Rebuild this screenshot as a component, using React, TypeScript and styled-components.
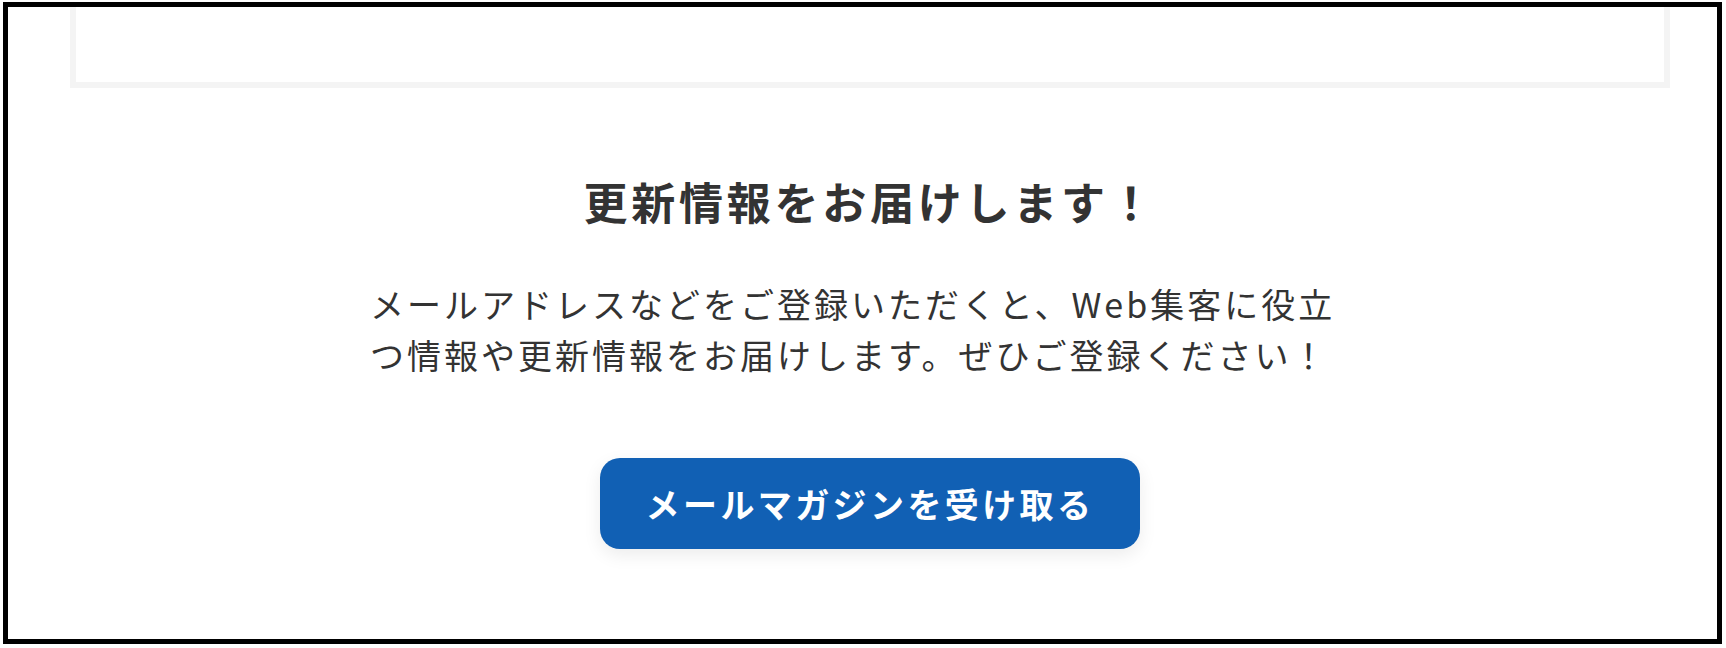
import React from 'react';
import styled, { createGlobalStyle } from 'styled-components';

const GlobalStyle = createGlobalStyle`
  html, body {
    margin: 0;
    padding: 0;
    background: #fff;
  }
  body {
    font-family: "Noto Sans CJK JP", "Noto Sans", sans-serif;
    color: #333;
  }
`;

function App() {
  return (
    <>
      <GlobalStyle />
      <Frame>
        <Inner>
          <PrevCard />
          <Newsletter>
            <Heading>更新情報をお届けします！</Heading>
            <Lead>
              メールアドレスなどをご登録いただくと、Web集客に役立つ情報や更新情報をお届けします。ぜひご登録ください！
            </Lead>
            <SubscribeButton href="#">メールマガジンを受け取る</SubscribeButton>
          </Newsletter>
        </Inner>
      </Frame>
    </>
  );
}

const Frame = styled.div`
  box-sizing: border-box;
  margin: 2px 0 0 3px;
  width: 1719px;
  height: 642px;
  border: 5px solid #000;
  overflow: hidden;
`;

const Inner = styled.div`
  width: 1600px;
  margin-left: 62px;
`;

// bottom of the card above, its top runs past the frame
const PrevCard = styled.div`
  box-sizing: border-box;
  height: 81px;
  border: 6px solid #f4f4f4;
  border-top: 0;
`;

const Newsletter = styled.section`
  display: flex;
  flex-direction: column;
  align-items: center;
  padding-top: 82px;
`;

const Heading = styled.h2`
  margin: 0;
  font-size: 44px;
  line-height: 63px;
  font-weight: 700;
  letter-spacing: 0.085em;
  color: #333;
`;

const Lead = styled.p`
  box-sizing: border-box;
  width: 1000px;
  padding-right: 20px;
  margin: 45px 0 0;
  font-size: 34px;
  line-height: 51px;
  letter-spacing: 0.088em;
  text-align: left;
  color: #333;
`;

const SubscribeButton = styled.a`
  display: flex;
  align-items: center;
  justify-content: center;
  width: 540px;
  height: 91px;
  margin-top: 78px;
  border-radius: 20px;
  background: #1160b4;
  color: #fff;
  font-size: 34px;
  font-weight: 700;
  letter-spacing: 0.1em;
  text-decoration: none;
  box-shadow: 0 6px 18px rgba(0, 0, 0, 0.08);
`;

export default App;
